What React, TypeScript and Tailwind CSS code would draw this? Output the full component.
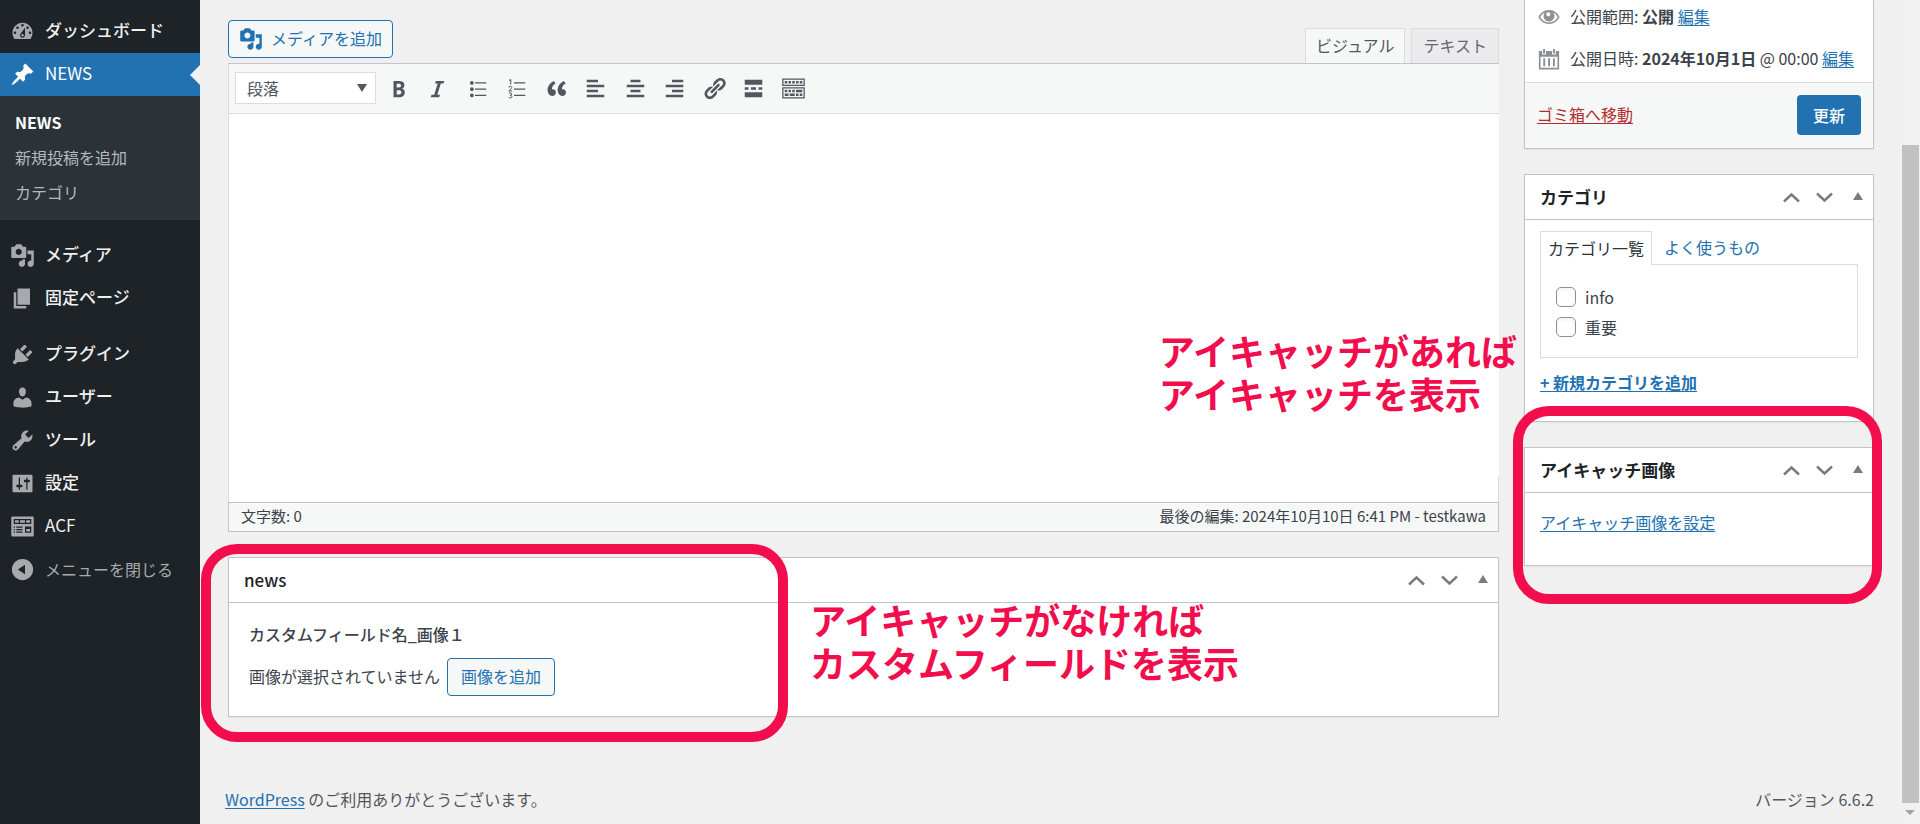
import type { ReactNode } from "react";

const paths = {
  dashboard:
    "M3.76 16h12.48c1.1-1.37 1.76-3.11 1.76-5 0-4.42-3.58-8-8-8s-8 3.58-8 8c0 1.89.66 3.63 1.76 5zM10 4c.55 0 1 .45 1 1s-.45 1-1 1-1-.45-1-1 .45-1 1-1zM6 6c.55 0 1 .45 1 1s-.45 1-1 1-1-.45-1-1 .45-1 1-1zm8 0c.55 0 1 .45 1 1s-.45 1-1 1-1-.45-1-1 .45-1 1-1zm-5.37 5.55L12 7v6c0 1.1-.9 2-2 2s-2-.9-2-2c0-.57.24-1.08.63-1.45zM4 10c.55 0 1 .45 1 1s-.45 1-1 1-1-.45-1-1 .45-1 1-1zm12 0c.55 0 1 .45 1 1s-.45 1-1 1-1-.45-1-1 .45-1 1-1zm-5 3c0-.55-.45-1-1-1s-1 .45-1 1 .45 1 1 1 1-.45 1-1z",
  pin: "M10.44 3.02l1.82-1.82 6.36 6.35-1.83 1.82c-1.05-.68-2.48-.57-3.41.36l-.75.75c-.92.93-1.04 2.35-.35 3.41l-1.83 1.82-2.41-2.41-2.8 2.79c-.42.42-3.38 2.71-3.8 2.29s1.86-3.39 2.28-3.81l2.79-2.79L4.1 9.36l1.83-1.82c1.05.69 2.48.57 3.4-.36l.75-.75c.93-.92 1.05-2.35.36-3.41z",
  media:
    "M13 11V4c0-.55-.45-1-1-1h-1.67L9 1H5L3.67 3H2c-.55 0-1 .45-1 1v7c0 .55.45 1 1 1h10c.55 0 1-.45 1-1zM7 4.5c1.38 0 2.5 1.12 2.5 2.5S8.38 9.5 7 9.5 4.5 8.38 4.5 7 5.62 4.5 7 4.5zM14 6h5v10.5c0 1.38-1.12 2.5-2.5 2.5S14 17.88 14 16.5s1.12-2.5 2.5-2.5c.17 0 .34.02.5.05V9h-3V6zm-4 8.05V13h2v3.5c0 1.38-1.12 2.5-2.5 2.5S7 17.88 7 16.5 8.12 14 9.5 14c.17 0 .34.02.5.05z",
  page: "M6 15V2h10v13H6zm-1 1h8v2H3V5h2v11z",
  plugin:
    "M13.11 4.36L9.87 7.6 8 5.73l3.24-3.24c.35-.34 1.05-.2 1.56.32.52.51.66 1.21.31 1.55zm-8 1.77l.91-1.12 9.01 9.01-1.19.84c-.71.71-2.63 1.16-3.82 1.16H6.14L4.9 17.26c-.59.59-1.54.59-2.12 0-.59-.58-.59-1.53 0-2.12l1.24-1.24v-3.88c0-1.13.4-3.19 1.09-3.89zm7.26 3.97l3.24-3.24c.34-.35 1.04-.21 1.55.31.52.51.66 1.21.31 1.55l-3.24 3.25z",
  user: "M10 9.25c-2.27 0-2.73-3.44-2.73-3.44C7 4.02 7.82 2 9.97 2c2.16 0 2.98 2.02 2.71 3.81 0 0-.41 3.44-2.68 3.44zm0 2.57L12.72 10c2.39 0 4.52 2.33 4.52 4.53v2.49s-3.65 1.13-7.24 1.13c-3.65 0-7.24-1.13-7.24-1.13v-2.49c0-2.25 1.94-4.48 4.47-4.48z",
  tools:
    "M16.68 9.77c-1.34 1.34-3.3 1.67-4.95.99l-5.41 6.52c-.99.99-2.59.99-3.58 0s-.99-2.59 0-3.57l6.52-5.42c-.68-1.65-.35-3.61.99-4.95 1.28-1.28 3.12-1.62 4.72-1.06l-2.89 2.89 2.82 2.82 2.86-2.87c.53 1.58.18 3.39-1.08 4.65zM3.81 16.21c.4.39 1.04.39 1.43 0 .4-.4.4-1.04 0-1.43-.39-.4-1.03-.4-1.43 0-.39.39-.39 1.03 0 1.43z",
  settings:
    "M18 16V4c0-.55-.45-1-1-1H3c-.55 0-1 .45-1 1v12c0 .55.45 1 1 1h14c.55 0 1-.45 1-1zM8 11h1c.55 0 1 .45 1 1s-.45 1-1 1H8v1.5c0 .28-.22.5-.5.5s-.5-.22-.5-.5V13H6c-.55 0-1-.45-1-1s.45-1 1-1h1V5.500c0-.28.22-.5.5-.5s.5.22.5.5V11zm5-2h-1c-.55 0-1-.45-1-1s.45-1 1-1h1V5.500c0-.28.22-.5.5-.5s.5.22.5.5V7h1c.55 0 1 .45 1 1s-.45 1-1 1h-1v5.500c0 .28-.22.5-.5.5s-.5-.22-.5-.5V9z",
  fields:
    "M19 16V3c0-.55-.45-1-1-1H2c-.55 0-1 .45-1 1v14c0 .55.45 1 1 1h16c.55 0 1-.45 1-1zM3 4h14v4H3V4zm1 1v2h3V5H4zm4 0v2h4V5H8zm5 0v2h3V5h-3zM3 10h1v1H3v-1zm2 0h5v1H5v-1zm7 0h5v5h-5v-5zm1 2v2h3v-2h-3zM3 12h1v1H3v-1zm2 0h5v1H5v-1zm-2 2h1v1H3v-1zm2 0h5v1H5v-1z",
  collapse:
    "M10 1.500a8.500 8.500 0 1 1 0 17a8.500 8.500 0 1 1 0-17zm2 12.300V6.200L6.200 10z",
  bold: "M6 4v13h4.540c1.370 0 2.460-.33 3.260-1 .8-.66 1.200-1.580 1.200-2.770 0-.84-.17-1.510-.51-2.010s-.9-.85-1.670-1.030v-.09c.57-.1 1.020-.4 1.360-.9s.51-1.130.51-1.910c0-1.140-.39-1.980-1.170-2.500C12.750 4.260 11.500 4 9.780 4H6zm2.570 5.150V6.260h1.360c.73 0 1.270.11 1.610.32.34.22.51.58.51 1.070 0 .54-.16.92-.47 1.150s-.82.35-1.510.35h-1.500zm0 2.190h1.600c1.440 0 2.160.53 2.160 1.610 0 .6-.17 1.050-.51 1.340s-.86.43-1.570.43H8.570v-3.380z",
  italic: "M14.78 6h-2.13l-2.8 9h2.12l-.62 2H4.6l.62-2h2.14l2.8-9H8.03l.62-2h6.75z",
  bullets:
    "M5.5 7C4.67 7 4 6.33 4 5.5 4 4.68 4.67 4 5.5 4 6.32 4 7 4.68 7 5.5 7 6.33 6.32 7 5.5 7zM8 5h9v1H8V5zm-2.500 7c-.83 0-1.500-.67-1.500-1.500C4 9.680 4.670 9 5.500 9c.82 0 1.500.68 1.500 1.500 0 .83-.68 1.500-1.500 1.500zM8 10h9v1H8v-1zm-2.500 7c-.83 0-1.500-.67-1.500-1.500 0-.82.67-1.500 1.500-1.500.82 0 1.500.68 1.500 1.500 0 .83-.68 1.500-1.500 1.500zM8 15h9v1H8v-1z",
  quote:
    "M9.49 13.22c0-.74-.2-1.38-.61-1.9-.62-.78-1.83-.88-2.53-.72-.29-1.65 1.11-3.75 2.92-4.65L7.88 4c-2.73 1.3-5.42 4.28-4.96 8.05C3.21 14.43 4.59 16 6.54 16c.85 0 1.56-.25 2.12-.75s.83-1.18.83-2.03zm8.05 0c0-.74-.2-1.38-.61-1.9-.63-.78-1.83-.88-2.53-.72-.29-1.65 1.11-3.75 2.92-4.65L15.93 4c-2.73 1.3-5.41 4.28-4.95 8.05.29 2.38 1.66 3.95 3.61 3.95.85 0 1.56-.25 2.12-.75s.83-1.18.83-2.03z",
  left: "M12 5V3H3v2h9zm5 4V7H3v2h14zm-5 4v-2H3v2h9zm5 4v-2H3v2h14z",
  center: "M14 5V3H6v2h8zm3 4V7H3v2h14zm-3 4v-2H6v2h8zm3 4v-2H3v2h14z",
  right: "M17 5V3H8v2h9zm0 4V7H3v2h14zm0 4v-2H8v2h9zm0 4v-2H3v2h14z",
  link: "M17.74 2.76c1.68 1.69 1.68 4.41 0 6.1l-1.53 1.52c-1.12 1.12-2.7 1.47-4.14 1.09l2.62-2.61.76-.77.76-.76c.84-.84.84-2.2 0-3.04-.84-.85-2.2-.85-3.04 0l-.77.76-3.38 3.38c-.37-1.44-.02-3.02 1.1-4.14l1.52-1.53c1.69-1.68 4.42-1.68 6.1 0zM8.59 13.43l5.34-5.34c.42-.42.42-1.1 0-1.52-.44-.43-1.13-.39-1.53 0l-5.33 5.34c-.42.42-.42 1.1 0 1.52.44.43 1.13.39 1.52 0zm-.76 2.29l4.14-4.15c.38 1.44.03 3.02-1.09 4.14l-1.52 1.53c-1.69 1.68-4.41 1.68-6.1 0-1.68-1.68-1.68-4.42 0-6.1l1.53-1.52c1.12-1.12 2.7-1.47 4.14-1.1l-4.14 4.15c-.85.84-.85 2.2 0 3.05.84.84 2.2.84 3.04 0z",
  more: "M17 7V3H3v4h14zM6 11V9H3v2h3zm6 0V9H8v2h4zm5 0V9h-3v2h3zm0 6v-4H3v4h14z",
  keyboard:
    "M19 2v6H1V2h18zm-1 5V3H2v4h16zM5 4v2H3V4h2zm3 0v2H6V4h2zm3 0v2H9V4h2zm3 0v2h-2V4h2zm3 0v2h-2V4h2zm2 5v9H1V9h18zm-1 8v-7H2v7h16zM5 11v2H3v-2h2zm3 0v2H6v-2h2zm3 0v2H9v-2h2zm6 0v2h-5v-2h5zm-11 3v2H3v-2h3zm5 0v2H7v-2h4zm3 0v2h-2v-2h2zm3 0v2h-2v-2h2z",
  eye: "M10 3.700C5.500 3.700 2.200 6.300.4 10c1.800 3.700 5.100 6.300 9.600 6.300s7.800-2.600 9.600-6.300C17.800 6.300 14.500 3.700 10 3.700zM10 15c-3.600 0-6.400-2-8-5 1-1.900 2.500-3.300 4.200-4.200A5 5 0 1 0 13.800 5.800c1.700.9 3.200 2.300 4.200 4.200-1.600 3-4.400 5-8 5zM9.400 5.600c1.100 0 1.900.9 1.900 1.900s-.8 1.900-1.900 1.900-1.900-.8-1.900-1.900.8-1.900 1.900-1.900z",
  calendar:
    "M.8 2.800h18.400v16.700H.8zM3.800 2.800v3h3.400v-3zM12.800 2.800v3h3.400v-3zM4.600 5V1.500c0-1.200 1.800-1.200 1.800 0V5zM13.600 5V1.500c0-1.200 1.800-1.200 1.800 0V5zM2.300 8v10h15.400V8zM4.800 9.300h1.700v7.400H4.800zm4.400 0h1.700v7.400H9.200zm4.400 0h1.700v7.400h-1.700z",
};

function Icon({ d, className }: { d: keyof typeof paths; className: string }) {
  return (
    <svg viewBox="0 0 20 20" fill="currentColor" fillRule="evenodd" aria-hidden="true" className={"shrink-0 " + className}>
      <path d={paths[d]} />
    </svg>
  );
}

function NumberedIcon() {
  return (
    <svg viewBox="0 0 20 20" fill="none" stroke="currentColor" aria-hidden="true" className="size-[25px] shrink-0">
      <path d="M8 5.500h9M8 10.500h9M8 15.500h9" />
      <path strokeWidth="0.8" d="M4 3.600l1.400-.8v4M3.800 9.200c.3-1.200 2.500-1.200 2.400.1 0 1-1.500 1.600-2.400 2.700h2.600M3.900 13.900c.9-.7 2.300-.4 2.300.5 0 .8-.8 1-1.400 1 .8 0 1.600.3 1.600 1.100 0 1.100-1.600 1.300-2.600.7" />
    </svg>
  );
}

function MenuItem({ icon, label, active }: { icon: keyof typeof paths; label: string; active?: boolean }) {
  return (
    <a
      href="#"
      className={
        active
          ? "flex h-[43px] items-center gap-[10px] bg-[#2271b1] pl-[10px] text-[17px] text-white"
          : "flex h-[43px] items-center gap-[10px] pl-[10px] text-[17px] font-medium text-[#f0f0f1]"
      }
    >
      <Icon d={icon} className={active ? "size-[25px] text-white" : "size-[25px] text-[#a7aaad]"} />
      <span className={label === "ACF" ? "flex-1 pb-[3px] font-normal" : "flex-1 pb-[3px]"}>{label}</span>
      {active && (
        <svg viewBox="0 0 10 20" fill="#f0f0f1" aria-hidden="true" className="h-5 w-[10px]">
          <path d="M10 0v20L0 10z" />
        </svg>
      )}
    </a>
  );
}

function Box({ title, light, children }: { title: string; light?: boolean; children: ReactNode }) {
  return (
    <section className="relative border border-[#c3c4c7] bg-white shadow-xs">
      <header className="flex h-[45px] items-center justify-between border-b border-[#c3c4c7] pr-[10px] pl-[15px] text-[#787c82]">
        <h2 className={light ? "text-[17px] font-medium text-[#1d2327]" : "text-[17px] font-semibold text-[#1d2327]"}>{title}</h2>
        <div className="flex items-center gap-[16px]">
          <button type="button" aria-label="上に移動">
            <svg viewBox="0 0 17 11" fill="none" stroke="currentColor" strokeWidth="2.400" className="h-[11px] w-[17px]">
              <path d="M1 9.500l7.500-7 7.500 7" />
            </svg>
          </button>
          <button type="button" aria-label="下に移動">
            <svg viewBox="0 0 17 11" fill="none" stroke="currentColor" strokeWidth="2.400" className="h-[11px] w-[17px]">
              <path d="M1 1.500l7.500 7 7.500-7" />
            </svg>
          </button>
          <button type="button" aria-label="パネルを閉じる" className="ml-1 pb-[3px]">
            <svg viewBox="0 0 10 8" fill="currentColor" className="h-2 w-[10px]">
              <path d="M5 0l5 8H0z" />
            </svg>
          </button>
        </div>
      </header>
      {children}
    </section>
  );
}

const link = "text-[#2271b1] underline underline-offset-2";
const marker = "pointer-events-none absolute z-10 rounded-[36px] border-[10px] border-[#f20d4c]";
const note = "pointer-events-none absolute z-10 text-[36px] leading-[43px] font-bold whitespace-nowrap text-[#f20d4c]";

const tools: [keyof typeof paths | "numbers", string][] = [
  ["bold", "太字"],
  ["italic", "イタリック"],
  ["bullets", "番号なしリスト"],
  ["numbers", "番号付きリスト"],
  ["quote", "引用"],
  ["left", "左寄せ"],
  ["center", "中央揃え"],
  ["right", "右寄せ"],
  ["link", "リンクの挿入"],
  ["more", "続きを読む"],
  ["keyboard", "ツールバー切り替え"],
];

export default function App() {
  return (
    <div className="flex min-h-screen bg-[#f0f0f1] font-['Noto_Sans_CJK_JP','Noto_Sans',sans-serif] text-[16px] leading-6 text-[#3c434a]">
      <nav className="w-[200px] shrink-0 bg-[#1d2327] pt-[10px]">
        <MenuItem icon="dashboard" label="ダッシュボード" />
        <MenuItem icon="pin" label="NEWS" active />
        <ul className="bg-[#2c3338] pt-2 pb-[11px] text-[#b4b9be]">
          <li>
            <a href="#" className="flex h-[35px] items-center pl-[15px] font-semibold text-white">NEWS</a>
          </li>
          <li>
            <a href="#" className="flex h-[35px] items-center pl-[15px]">新規投稿を追加</a>
          </li>
          <li>
            <a href="#" className="flex h-[35px] items-center pl-[15px]">カテゴリ</a>
          </li>
        </ul>
        <div className="pt-[14px]">
          <MenuItem icon="media" label="メディア" />
          <MenuItem icon="page" label="固定ページ" />
        </div>
        <div className="pt-[13px]">
          <MenuItem icon="plugin" label="プラグイン" />
          <MenuItem icon="user" label="ユーザー" />
          <MenuItem icon="tools" label="ツール" />
          <MenuItem icon="settings" label="設定" />
          <MenuItem icon="fields" label="ACF" />
        </div>
        <button type="button" className="flex h-[43px] items-center gap-[10px] pl-[10px] text-[#a7aaad]">
          <Icon d="collapse" className="size-[25px]" />
          <span className="pb-0.5">メニューを閉じる</span>
        </button>
      </nav>

      <div className="flex min-w-0 flex-1 flex-col">
        <main className="flex gap-[25px] pr-[26px] pl-7">
          <div className="min-w-0 flex-1 pt-5">
            <div className="flex h-[43px] justify-between">
              <button
                type="button"
                className="flex h-[38px] items-center gap-2 rounded-[4px] border border-[#2271b1] bg-[#f6f7f7] px-[10px] text-[#2271b1]"
              >
                <Icon d="media" className="size-6" />
                <span className="pb-0.5">メディアを追加</span>
              </button>
              <div className="flex gap-[6px] self-end text-[#50575e]">
                <button type="button" className="h-[35px] border border-b-0 border-[#dcdcde] bg-[#f6f7f7] px-[10px] pb-[3px]">
                  ビジュアル
                </button>
                <button type="button" className="h-[35px] border border-b-0 border-[#dcdcde] bg-[#ebebed] px-[11px] pb-[3px] text-[#646970]">
                  テキスト
                </button>
              </div>
            </div>

            <section className="relative border-t border-[#c3c4c7]">
              <div className="flex h-[50px] items-center border-b border-l border-[#dcdcde] bg-[#f6f7f7] pb-px pl-[6px] text-[#50575e]">
                <div className="grid w-[141px] items-center">
                  <select
                    aria-label="書式"
                    className="col-start-1 row-start-1 h-8 appearance-none border border-[#dcdcde] bg-white pl-[11px]"
                  >
                    <option>段落</option>
                  </select>
                  <svg viewBox="0 0 10 8" fill="currentColor" className="pointer-events-none col-start-1 row-start-1 mr-[9px] h-2 w-[10px] justify-self-end">
                    <path d="M0 0h10L5 8z" />
                  </svg>
                </div>
                <div className="ml-1 flex w-[431px] justify-between">
                  {tools.map(([name, label]) => (
                    <button key={name} type="button" aria-label={label} className="flex size-9 items-center justify-center">
                      {name === "numbers" ? <NumberedIcon /> : <Icon d={name} className="size-[25px]" />}
                    </button>
                  ))}
                </div>
              </div>
              <textarea
                aria-label="本文"
                className="block h-[362px] w-full resize-none border-l border-[#dcdcde] bg-white p-4 outline-none"
              />
              <div className="h-[26px] border-x border-[#dcdcde] bg-white" />
              <div className="flex h-[30px] items-center justify-between border border-[#c3c4c7] bg-[#f6f7f7] px-3 pb-0.5 text-[15px]">
                <span>文字数: 0</span>
                <span>最後の編集: 2024年10月10日 6:41 PM - testkawa</span>
              </div>
              <p className={note + " top-[265px] -right-[18px]"}>
                アイキャッチがあれば
                <br />
                アイキャッチを表示
              </p>
            </section>

            <div className="mt-[25px]">
              <Box title="news" light>
                <div className="px-5 pt-[19px] pb-5">
                  <h3 className="font-medium">カスタムフィールド名_画像１</h3>
                  <div className="mt-3 flex items-center gap-[7px]">
                    <span className="pb-0.5">画像が選択されていません</span>
                    <button type="button" className="h-[38px] rounded-[4px] border border-[#2271b1] bg-[#f6f7f7] px-[13px] pb-0.5 text-[#2271b1]">
                      画像を追加
                    </button>
                  </div>
                </div>
                <div className={marker + " -top-[14px] -left-7 h-[198px] w-[587px]"} />
                <p className={note + " top-10 left-[581px]"}>
                  アイキャッチがなければ
                  <br />
                  カスタムフィールドを表示
                </p>
              </Box>
            </div>
          </div>

          <aside className="flex w-[350px] shrink-0 flex-col gap-[25px]">
            <section className="border border-t-0 border-[#c3c4c7] bg-white shadow-xs">
              <div className="flex flex-col gap-4 px-[13px] pt-1 pb-[10px]">
                <div className="flex items-center gap-[10px]">
                  <Icon d="eye" className="size-[22px] text-[#8c8f94]" />
                  <span className="pb-0.5">
                    公開範囲: <b>公開</b> <a href="#" className={link}>編集</a>
                  </span>
                </div>
                <div className="flex items-center gap-[10px] whitespace-nowrap">
                  <Icon d="calendar" className="size-[22px] text-[#8c8f94]" />
                  <span className="pb-0.5">
                    公開日時: <b className="font-semibold">2024年10月1日</b> @ 00:00{" "}
                    <a href="#" className={link}>編集</a>
                  </span>
                </div>
              </div>
              <div className="flex items-center justify-between border-t border-[#dcdcde] bg-[#f6f7f7] px-3 pt-3 pb-[13px]">
                <a href="#" className="pb-[3px] text-[#b32d2e] underline underline-offset-2">ゴミ箱へ移動</a>
                <button type="button" className="h-10 rounded-[4px] bg-[#2271b1] px-4 font-medium text-white">
                  更新
                </button>
              </div>
            </section>

            <Box title="カテゴリ">
              <div className="px-[15px] pt-[11px] pb-[27px]">
                <div className="flex">
                  <button type="button" className="z-10 -mb-px h-[34px] border border-b-0 border-[#dcdcde] bg-white px-[7px] pb-0.5 text-[#2c3338]">
                    カテゴリ一覧
                  </button>
                  <button type="button" className="px-3 pb-0.5 text-[#2271b1]">よく使うもの</button>
                </div>
                <div className="border border-[#dcdcde] pt-[17px] pb-[15px] pl-[15px]">
                  {["info", "重要"].map((name) => (
                    <label key={name} className="flex h-[30px] items-center gap-[9px]">
                      <input type="checkbox" className="size-5 appearance-none rounded-[5px] border border-[#8c8f94] bg-white shadow-inner" />
                      {name}
                    </label>
                  ))}
                </div>
                <a href="#" className={link + " mt-3 block w-fit font-semibold"}>+ 新規カテゴリを追加</a>
              </div>
            </Box>

            <Box title="アイキャッチ画像">
              <div className="px-[15px] pt-[17px] pb-[31px]">
                <a href="#" className={link + " block w-fit"}>アイキャッチ画像を設定</a>
              </div>
              <div className={marker + " -top-[42px] -right-[9px] -left-3 h-[198px]"} />
            </Box>
          </aside>
        </main>

        <footer className="mt-auto flex justify-between pr-[26px] pb-[13px] pl-[25px] text-[#50575e]">
          <p>
            <a href="#" className={link}>WordPress</a> のご利用ありがとうございます。
          </p>
          <p>バージョン 6.6.2</p>
        </footer>
      </div>

      <div aria-hidden="true" className="flex w-5 shrink-0 flex-col items-center bg-[#f1f1f1] pt-[145px]">
        <div className="w-[17px] flex-1 bg-[#c1c1c1]" />
        <svg viewBox="0 0 10 5" fill="#a3a3a3" className="mt-[7px] mb-[9px] h-[5px] w-[10px]">
          <path d="M0 0h10L5 5z" />
        </svg>
      </div>
    </div>
  );
}
